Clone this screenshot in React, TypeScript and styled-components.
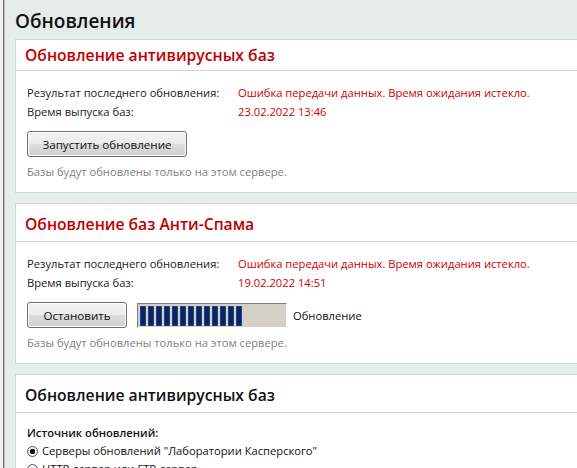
import styled, { createGlobalStyle } from 'styled-components';

const GlobalStyle = createGlobalStyle`
    html, body {
        margin: 0;
        padding: 0;
        background: #e5ecea;
        overflow: hidden;
    }
    body {
        font-family: "Open Sans", "Noto Sans", sans-serif;
        font-size: 11.2px;
        color: #1a1a1a;
    }
`;

const App = () => {
    // данные по двум базам
    const updates = [
        {
            title: 'Обновление антивирусных баз',
            result: 'Ошибка передачи данных. Время ожидания истекло.',
            date: '23.02.2022 13:46',
            running: false,
        },
        {
            title: 'Обновление баз Анти-Спама',
            result: 'Ошибка передачи данных. Время ожидания истекло.',
            date: '19.02.2022 14:51',
            running: true,
        },
    ];

    return (
        <Page>
            <GlobalStyle />
            <SideEdge />
            <Main>
                <Title>Обновления</Title>
                <PanelList>
                    {updates.map((u, i) => (
                        <Panel key={u.title}>
                            <PanelHeader compact={i === 0}>
                                <PanelTitle>{u.title}</PanelTitle>
                            </PanelHeader>
                            <PanelBody>
                                <InfoGrid>
                                    <Label>Результат последнего обновления:</Label>
                                    <Value>{u.result}</Value>
                                    <Label>Время выпуска баз:</Label>
                                    <Value>{u.date}</Value>
                                </InfoGrid>
                                <ActionRow>
                                    {u.running ? (
                                        <>
                                            <Button width={100}>Остановить</Button>
                                            <Progress>
                                                {Array.from({ length: 13 }).map((_, k) => (
                                                    <Block key={k} />
                                                ))}
                                            </Progress>
                                            <Status>Обновление</Status>
                                        </>
                                    ) : (
                                        <Button width={160}>Запустить обновление</Button>
                                    )}
                                </ActionRow>
                                <Note>Базы будут обновлены только на этом сервере.</Note>
                            </PanelBody>
                        </Panel>
                    ))}
                    <Panel>
                        <PanelHeader>
                            <PanelTitle dark>Обновление антивирусных баз</PanelTitle>
                        </PanelHeader>
                        <PanelBody tight>
                            <SourceTitle>Источник обновлений:</SourceTitle>
                            <RadioRow>
                                <Radio checked />
                                Серверы обновлений "Лаборатории Касперского"
                            </RadioRow>
                            <RadioRow>
                                <Radio />
                                HTTP-сервер или FTP-сервер
                            </RadioRow>
                        </PanelBody>
                    </Panel>
                </PanelList>
            </Main>
        </Page>
    );
};

export default App;

const Page = styled.div`
    display: flex;
    flex-direction: row;
    width: 100%;
    height: 468px;
    overflow: hidden;
`;

const SideEdge = styled.div`
    flex: 0 0 3px;
    background: #f0f0f0;
    border-right: 1px solid #6e6e6e;
    box-shadow: 1px 0 0 #b9b9b9;
`;

const Main = styled.div`
    flex: 1;
    padding: 0 0 0 11px;
    min-width: 0;
`;

const Title = styled.div`
    font-size: 19px;
    font-weight: 600;
    color: #111;
    line-height: 24px;
    padding: 9px 0 6px 0;
`;

const PanelList = styled.div`
    display: flex;
    flex-direction: column;
    gap: 10px;
`;

const Panel = styled.div`
    background: #fff;
    border: 1px solid #d0d6d4;
    border-right: none;
`;

const PanelHeader = styled.div<{ compact?: boolean }>`
    display: flex;
    align-items: center;
    height: ${(p) => (p.compact ? 31 : 38)}px;
    padding: ${(p) => (p.compact ? '0' : '2px')} 0 0 9px;
    box-sizing: border-box;
    border-bottom: 1px solid #d0d6d4;
`;

const PanelTitle = styled.div<{ dark?: boolean }>`
    font-size: 15.7px;
    font-weight: 600;
    color: ${(p) => (p.dark ? '#111' : '#c00000')};
    line-height: 22px;
`;

const PanelBody = styled.div<{ tight?: boolean }>`
    padding: ${(p) => (p.tight ? 10 : 12)}px 11px 11px 11px;
`;

const InfoGrid = styled.div`
    display: grid;
    grid-template-columns: 211px auto;
    line-height: 19px;
`;

const Label = styled.div`
    color: #1a1a1a;
`;

const Value = styled.div`
    color: #cc0000;
`;

const ActionRow = styled.div`
    display: flex;
    align-items: center;
    gap: 10px;
    margin-top: 10px;
`;

const Button = styled.button<{ width: number }>`
    width: ${(p) => p.width}px;
    height: 26px;
    padding: 0;
    font-family: inherit;
    font-size: 11.6px;
    color: #111;
    border: 1px solid #707070;
    border-radius: 3px;
    background: linear-gradient(#f3f3f3 0%, #ebebeb 50%, #dddddd 51%, #cfcfcf 100%);
    box-shadow: inset 0 0 0 1px #fcfcfc;
`;

const Progress = styled.div`
    display: flex;
    gap: 2px;
    width: 150px;
    height: 25px;
    box-sizing: border-box;
    padding: 2px 2px 1px 2px;
    background: #d4d0c8;
    border-top: 1px solid #808080;
    border-left: 1px solid #808080;
    border-right: 1px solid #ffffff;
    border-bottom: 1px solid #ffffff;
`;

const Block = styled.div`
    width: 6px;
    background: #0a246a;
    box-shadow: inset 0 0 0 1px #27407e;
`;

const Status = styled.span`
    margin-left: -4px;
    color: #111;
`;

const Note = styled.div`
    margin-top: 6px;
    line-height: 18px;
    color: #7f7f7f;
`;

const SourceTitle = styled.div`
    font-weight: 600;
    line-height: 19px;
    color: #111;
`;

const RadioRow = styled.div`
    display: flex;
    align-items: center;
    gap: 4px;
    line-height: 18px;
    color: #111;
`;

const Radio = styled.span<{ checked?: boolean }>`
    position: relative;
    width: 11px;
    height: 11px;
    box-sizing: border-box;
    border-radius: 50%;
    border: 1px solid #555;
    background: ${(p) =>
        p.checked
            ? 'radial-gradient(circle, #111 0 2.5px, #f4f4f4 3px)'
            : '#f4f4f4'};
`;
